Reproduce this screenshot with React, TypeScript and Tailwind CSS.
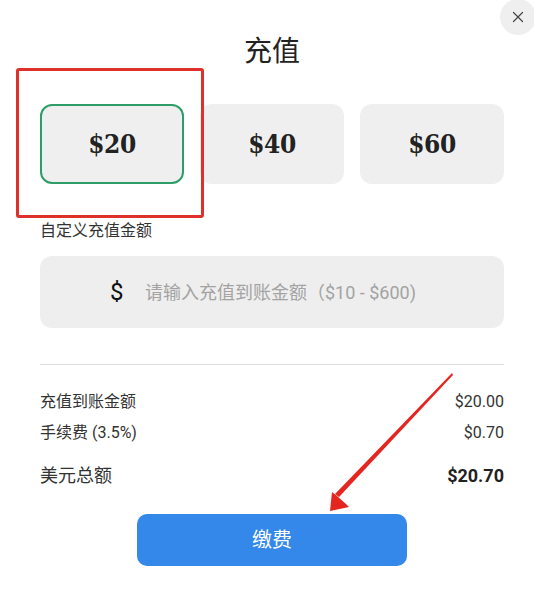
import { X } from "lucide-react";

const amounts = [20, 40, 60];

function AmountCard({ value, selected }: { value: number; selected?: boolean }) {
  return (
    <button
      className={
        selected
          ? "h-[80px] rounded-xl bg-[#efefef] border-2 border-[#2f9d68] flex items-center justify-center"
          : "h-[80px] rounded-xl bg-[#efefef] border-2 border-transparent flex items-center justify-center"
      }
    >
      <span
        className="text-[26px] font-bold text-[#222] tracking-[-0.5px]"
        style={{ fontFamily: '"DejaVu Serif Condensed", "DejaVu Serif", serif' }}
      >
        ${value}
      </span>
    </button>
  );
}

export default function App() {
  return (
    <div
      className="relative w-[534px] h-[592px] bg-white overflow-hidden text-[#333]"
      style={{ fontFamily: 'Roboto, "Noto Sans CJK SC", sans-serif' }}
    >
      {/* close */}
      <button className="absolute right-[-2px] top-[-1px] w-9 h-9 rounded-full bg-[#efefef] flex items-center justify-center text-[#444]">
        <X size={18} strokeWidth={1.6} />
      </button>

      <div className="pl-10 pr-[30px] pt-[32px]">
        <h1 className="text-center text-[28px] leading-[40px] text-[#222]">充值</h1>

        {/* preset amounts */}
        <div className="relative mt-[32px] grid grid-cols-3 gap-4">
          {amounts.map((a, i) => (
            <AmountCard key={a} value={a} selected={i === 0} />
          ))}
          {/* annotation box */}
          <div className="absolute left-[-24px] top-[-36px] w-[188px] h-[150px] border-[3px] border-[#e0302a] rounded-[3px] pointer-events-none" />
        </div>

        {/* custom amount */}
        <div className="mt-[36px] text-[16px] leading-[22px] text-[#333]">自定义充值金额</div>
        <div className="mt-[14px] h-[72px] rounded-xl bg-[#eeeeee] flex items-center pl-[70px]">
          <span className="text-[24px] text-[#111] w-[35px]">$</span>
          <span className="text-[18px] text-[#a3a3a3]">请输入充值到账金额（$10 - $600)</span>
        </div>

        <div className="mt-[36px] h-px bg-[#dedede]" />

        {/* summary */}
        <div className="mt-[26px] flex flex-col text-[16px]">
          <div className="flex justify-between leading-[22px]">
            <span>充值到账金额</span>
            <span>$20.00</span>
          </div>
          <div className="mt-[9px] flex justify-between leading-[22px]">
            <span>手续费 (3.5%)</span>
            <span>$0.70</span>
          </div>
          <div className="mt-[20px] flex justify-between leading-[24px]">
            <span className="text-[18px]">美元总额</span>
            <span className="text-[18px] font-bold text-[#222]">$20.70</span>
          </div>
        </div>

        <div className="mt-[26px] flex justify-center">
          <button className="w-[270px] h-[52px] rounded-[10px] bg-[#3388ea] text-white text-[20px]">
            缴费
          </button>
        </div>
      </div>

      {/* annotation arrow */}
      <svg className="absolute left-0 top-0 pointer-events-none" width="534" height="592">
        <polygon points="452,373 453,375 339,497 335,494" fill="#e5251f" />
        <polygon points="330,511 332,492 337,496 346,504 349,507" fill="#e5251f" />
      </svg>
    </div>
  );
}
